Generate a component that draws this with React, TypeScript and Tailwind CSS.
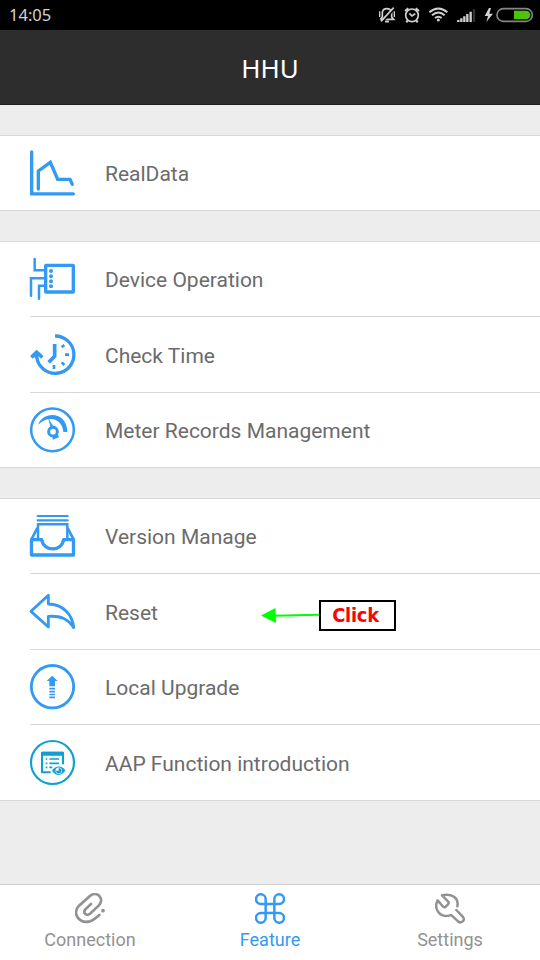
import type { ReactNode } from "react";

const BLUE = "#3399f3";
const TEAL = "#109fd2";

function RowIcon({ viewBox, color = BLUE, children }: { viewBox: string; color?: string; children: ReactNode }) {
  return (
    <svg
      className="h-[45px] w-[45px] shrink-0 overflow-visible"
      viewBox={viewBox}
      fill="none"
      stroke={color}
      strokeWidth={10}
      strokeLinecap="round"
    >
      {children}
    </svg>
  );
}

const icons: Record<string, ReactNode> = {
  chart: (
    <RowIcon viewBox="30 60 135 135">
      <path d="M35 66V191.5H160" />
      <path d="M55 177V123L91 97L113 148H150L157 163" />
    </RowIcon>
  ),
  device: (
    <RowIcon viewBox="30 63 135 135">
      <rect x="77" y="91" width="83" height="80" strokeWidth="10" rx="1" />
      <path d="M44 72V106H76M33 182V130H76M57 191V152H76" strokeWidth="7.500" />
      <path d="M93 108h.1M93 124h.1M93 139h.1M93 154h.1" strokeWidth="12" />
    </RowIcon>
  ),
  clock: (
    <RowIcon viewBox="30 48 135 135">
      <path d="M105 63A56 56 0 1 1 50 125" strokeLinecap="butt" />
      <path d="M49 128V113M34 127L50 112L67 127" strokeLinecap="butt" strokeWidth="11" />
      <path d="M104 87V124L86 142" strokeWidth="11" strokeLinecap="butt" />
      <path d="M125 97l8-7M135 119h12M125 142l8 8M102 150v12" strokeWidth="8" strokeLinecap="butt" />
    </RowIcon>
  ),
  gauge: (
    <RowIcon viewBox="30 276 135 135">
      <circle cx="97.500" cy="344.500" r="64" strokeWidth="7.500" />
      <path d="M55 329C66 289 141 285 142 351H130C128 309 82 299 55 329Z" fill={BLUE} stroke="none" />
      <circle cx="99" cy="350" r="13" strokeWidth="9" />
      <path d="M84 308L94 344L102 337Z" fill={BLUE} stroke="none" />
      <path d="M98 362L112 355L117 367L98 374Z" fill={BLUE} stroke="none" />
    </RowIcon>
  ),
  tray: (
    <RowIcon viewBox="30 69 135 135">
      <path d="M53 78H143M53 91H143" strokeWidth="6.500" />
      <path d="M54 146V103H142V146" strokeWidth="7.500" />
      <path d="M51 116L34 149M144 116L161 149" strokeWidth="8" />
      <path d="M34.500 149H65C72 186 124 186 131 149H160.500V195H34.500Z" strokeWidth="10" strokeLinejoin="round" />
    </RowIcon>
  ),
  reset: (
    <RowIcon viewBox="30 294 135 135">
      <path
        d="M33 364L85 316V342C130 342 158 376 161 413C144 387 124 377 85 379V411Z"
        strokeWidth="8.500"
        strokeLinejoin="round"
      />
    </RowIcon>
  ),
  upgrade: (
    <RowIcon viewBox="30 72 135 135">
      <circle cx="97.500" cy="140" r="63.500" strokeWidth="8.500" />
      <path d="M97 107L113 123H105V139H88V123H80Z" fill={BLUE} stroke="none" />
      <path d="M88 146H105M88 155H105M88 163.500H105M88 172H105" strokeWidth="5" strokeLinecap="butt" />
    </RowIcon>
  ),
  intro: (
    <RowIcon viewBox="30 297 135 135" color={TEAL}>
      <circle cx="97.500" cy="367.500" r="64.500" strokeWidth="6.500" />
      <path d="M92 397H66V338H129V373" strokeWidth="6" strokeLinejoin="round" strokeLinecap="butt" />
      <path d="M64 339Q64 335 69 335H126Q131 335 131 339V347H64Z" fill={TEAL} stroke="none" />
      <path d="M77 357H82M88 357H117M77 370H82M88 370H117M77 382H82M88 382H97" strokeWidth="5" strokeLinecap="butt" />
      <path d="M96 392C106 376 126 375 136 391C126 409 107 409 96 392Z" fill={TEAL} stroke="none" />
      <circle cx="116" cy="392" r="9.500" fill="#fff" stroke="none" />
      <path d="M116 392V384A8 8 0 1 1 108 392Z" fill={TEAL} stroke="none" />
    </RowIcon>
  ),
};

type Item = { icon: string; label: string; size: string; text: string };

const groups: Item[][] = [
  [{ icon: "chart", label: "RealData", size: "h-[74px]", text: "pt-[9px]" }],
  [
    { icon: "device", label: "Device Operation", size: "h-[74px]", text: "pt-[9px]" },
    { icon: "clock", label: "Check Time", size: "h-[75px]", text: "pt-[10px]" },
    { icon: "gauge", label: "Meter Records Management", size: "h-[74px]", text: "pt-[9px]" },
  ],
  [
    { icon: "tray", label: "Version Manage", size: "h-[74px]", text: "pt-[9px]" },
    { icon: "reset", label: "Reset", size: "h-[75px]", text: "pt-[10px]" },
    { icon: "upgrade", label: "Local Upgrade", size: "h-[74px]", text: "pt-[9px]" },
    { icon: "intro", label: "AAP Function introduction", size: "h-[75px]", text: "pt-[10px]" },
  ],
];

function ClickNote() {
  return (
    <div className="absolute left-[260px] top-[25px] flex items-center">
      <svg className="h-[32px] w-[59px]" viewBox="0 0 59 32">
        <path d="M14 16.700L59 15.700" stroke="#00ff00" strokeWidth="2" />
        <path d="M1 16.500L15.500 9L16 24Z" fill="#00ff00" />
      </svg>
      <div className="flex h-[31px] w-[77px] items-center justify-center border-2 border-black bg-white pr-1 font-['DejaVu_Sans_Condensed','DejaVu_Sans',sans-serif] text-[20px] font-bold leading-none tracking-[-0.3px] text-[#fa0505]">
        Click
      </div>
    </div>
  );
}

function StatusBar() {
  return (
    <header className="flex h-[30px] items-center justify-between bg-black pl-[9px]">
      <span className="font-['Noto_Sans',sans-serif] text-[16.5px] leading-none text-[#d2d2d2]">14:05</span>
      <svg className="h-[30px] w-[180px]" viewBox="0 0 540 90" fill="none" stroke="#d0d0d0" strokeWidth="5">
        <path d="M61 58L67 51V37Q69 26 80 26Q92 26 95 37V51L101 58H61M75 65H87" />
        <path d="M105 25L69 64" stroke="#000" strokeWidth="5" />
        <path d="M101 23L63 64" />
        <path d="M59 34V51M103 34V51" strokeWidth="4" />
        <circle cx="156" cy="46" r="19" />
        <path d="M148 40L156 48L166 41" />
        <path d="M135 33L145 25M167 25L177 33M143 61L139 67M169 61L173 67" strokeWidth="6" />
        <path d="M208 37Q235 14 262 37M216 46Q235 29 254 46M225 54Q235 46 245 54" strokeWidth="6" />
        <circle cx="235" cy="60" r="4.500" fill="#d0d0d0" stroke="none" />
        <path d="M295 66V60M304 66V55M313 66V49M322 66V42M332 66V35" strokeWidth="7" />
        <path d="M342 66V27" stroke="#303030" strokeWidth="7" />
        <path d="M387 24L374 48H384L379 66L399 41H388L393 24Z" fill="#d0d0d0" stroke="none" />
        <rect x="411" y="26" width="106" height="38" rx="19" stroke="#858585" strokeWidth="5" />
        <path d="M462 32H498A13 13 0 0 1 498 58H462Z" fill="#4fc20b" stroke="none" />
      </svg>
    </header>
  );
}

function TabBar() {
  return (
    <nav className="grid h-[76px] grid-cols-3 border-t border-[#cfcfcf] bg-white font-[Roboto,sans-serif] text-[18px] leading-[22px] text-[#929292]">
      <div className="flex flex-col items-center pt-2">
        <svg className="h-[31px] w-[30px]" viewBox="105 54 90 93" fill="none" stroke="#929292" strokeWidth="8" strokeLinecap="round">
          <path d="M153 87L136 103C127 115 140 124 150 116L176 92C195 72 173 47 151 62L117 92C95 115 117 147 150 139C160 136 169 128 178 120" />
          <circle cx="189" cy="107" r="5.500" fill="#929292" stroke="none" />
        </svg>
        <span className="mt-[5px]">Connection</span>
      </div>
      <div className="flex flex-col items-center pt-2 text-[#3399f3]">
        <svg className="h-[31px] w-[30px]" viewBox="135 54 90 93" fill="none" stroke="#3399f3" strokeWidth="7.500">
          <path d="M167 87H153A14.500 14.500 0 1 1 167 72V129A14.500 14.500 0 1 1 153 114H207A14.500 14.500 0 1 1 193 129V72A14.500 14.500 0 1 1 207 87Z" />
        </svg>
        <span className="mt-[5px]">Feature</span>
      </div>
      <div className="flex flex-col items-center pt-2">
        <svg className="h-[31px] w-[30px]" viewBox="105 54 90 93" fill="none" stroke="#929292" strokeWidth="7.500" strokeLinecap="round" strokeLinejoin="round">
          <path d="M172 94C177 71 158 53 126 61L144 79Q148 83 144 88L137 95Q132 99 128 94L113 76C100 101 119 130 149 121Q154 119 158 124L172 137C181 148 199 137 188 125L169 105" />
        </svg>
        <span className="mt-[5px]">Settings</span>
      </div>
    </nav>
  );
}

export default function App() {
  return (
    <div className="flex h-[960px] w-[540px] flex-col overflow-hidden bg-[#ededed]">
      <StatusBar />
      <div className="flex h-[75px] items-center justify-center border-b border-[#202020] bg-[#2d2d2d] pt-[2px] font-['Noto_Sans',sans-serif] text-[26px] leading-none text-white">
        HHU
      </div>
      <main className="flex flex-1 flex-col gap-[30px] pt-[30px]">
        {groups.map((items) => (
          <section key={items[0].label} className="border-y border-[#d8d8d8] bg-white">
            {items.map((item, i) => (
              <div key={item.label}>
                {i > 0 && <div className="ml-[30px] h-px bg-[#d8d8d8]" />}
                <div className={`relative flex gap-[30px] pl-[30px] pt-[14px] ${item.size}`}>
                  {icons[item.icon]}
                  <span
                    className={`font-[Roboto,sans-serif] text-[21px] leading-[30px] text-[#6b6b6b] ${item.text}`}
                  >
                    {item.label}
                  </span>
                  {item.icon === "reset" && <ClickNote />}
                </div>
              </div>
            ))}
          </section>
        ))}
      </main>
      <TabBar />
    </div>
  );
}
